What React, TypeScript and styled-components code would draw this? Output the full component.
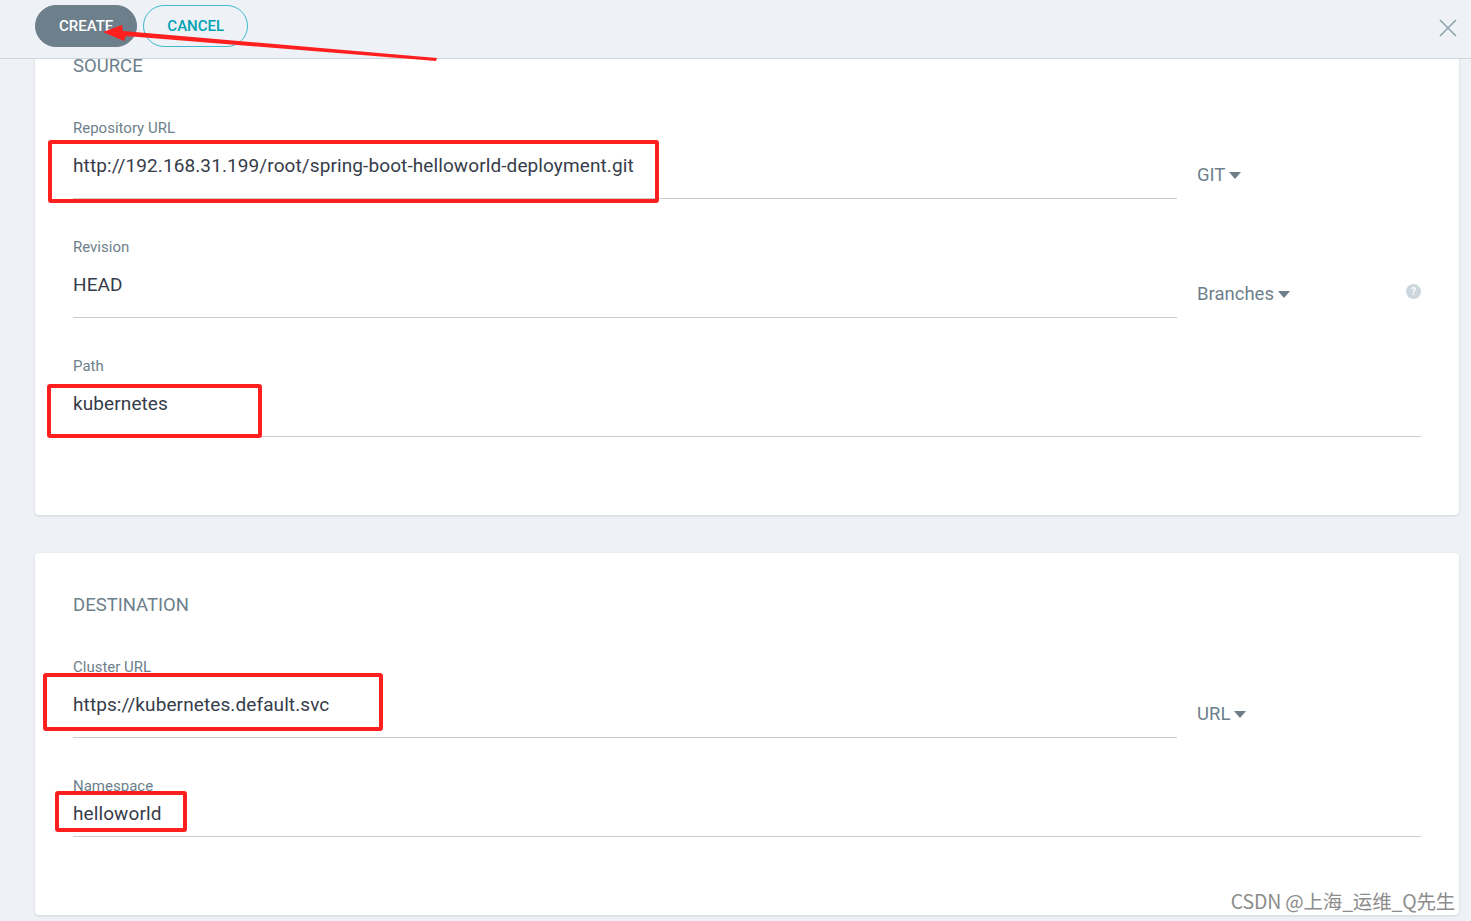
import styled, { createGlobalStyle } from 'styled-components';

const GlobalStyle = createGlobalStyle`
  html, body {
    margin: 0;
    padding: 0;
    background: #eef1f5;
    font-family: Roboto, "Noto Sans", sans-serif;
    overflow: hidden;
  }
`;

interface FieldProps {
  label: string;
  value: string;
  compact?: boolean;
  full?: boolean;
}

function Field({ label, value, compact, full }: FieldProps) {
  return (
    <FieldBox $full={full}>
      <Label>{label}</Label>
      <ValueInput $compact={compact}>{value}</ValueInput>
    </FieldBox>
  );
}

function Dropdown({ text }: { text: string }) {
  return (
    <DropdownBox>
      {text}
      <Caret viewBox="0 0 12 7">
        <path d="M0 0h12L6 7z" fill="#6d7f8b" />
      </Caret>
    </DropdownBox>
  );
}

function App() {
  return (
    <Page>
      <GlobalStyle />
      <Header>
        <CreateButton>CREATE</CreateButton>
        <CancelButton>CANCEL</CancelButton>
        <CloseIcon viewBox="0 0 18 18">
          <path d="M1 1l16 16M17 1L1 17" stroke="#8fa3b0" strokeWidth="1.6" />
        </CloseIcon>
      </Header>
      <Body>
        <Card $clipped>
          <SectionTitle>SOURCE</SectionTitle>
          <Row>
            <Field label="Repository URL" value="http://192.168.31.199/root/spring-boot-helloworld-deployment.git" />
            <Dropdown text="GIT" />
          </Row>
          <Row>
            <Field label="Revision" value="HEAD" />
            <Dropdown text="Branches" />
            <HelpIcon>?</HelpIcon>
          </Row>
          <Row>
            <Field label="Path" value="kubernetes" full />
          </Row>
        </Card>
        <Card>
          <SectionTitle>DESTINATION</SectionTitle>
          <Row>
            <Field label="Cluster URL" value="https://kubernetes.default.svc" />
            <Dropdown text="URL" />
          </Row>
          <Row>
            <Field label="Namespace" value="helloworld" full compact />
          </Row>
        </Card>
      </Body>

      <Mark style={{ left: 48, top: 140, width: 611, height: 63 }} />
      <Mark style={{ left: 47, top: 384, width: 215, height: 54 }} />
      <Mark style={{ left: 43, top: 673, width: 340, height: 58 }} />
      <Mark style={{ left: 55, top: 791, width: 132, height: 41 }} />
      <Arrow viewBox="0 0 1471 921">
        <polygon points="437,58 436,61 126,36 124,41 103,32 122,25 123,31" fill="#ff1f1f" />
      </Arrow>
      <Watermark>CSDN @上海_运维_Q先生</Watermark>
    </Page>
  );
}

const Page = styled.div`
  position: relative;
  height: 921px;
  display: flex;
  flex-direction: column;
`;

const Header = styled.div`
  height: 53px;
  flex-shrink: 0;
  display: flex;
  align-items: flex-start;
  gap: 6px;
  padding: 5px 14px 0 35px;
  border-bottom: 1px solid #cfd6dc;
  box-sizing: content-box;
`;

const PillButton = styled.button`
  height: 42px;
  border-radius: 21px;
  font-family: Roboto, sans-serif;
  font-size: 15px;
  font-weight: 500;
  padding: 0 23px;
  cursor: pointer;
`;

const CreateButton = styled(PillButton)`
  background: #6d7f8b;
  border: 1px solid #6d7f8b;
  color: #fff;
`;

const CancelButton = styled(PillButton)`
  background: transparent;
  border: 1px solid #3ebccd;
  color: #00a2b3;
`;

const CloseIcon = styled.svg`
  width: 18px;
  height: 18px;
  margin-left: auto;
  margin-top: 14px;
`;

const Body = styled.div`
  flex: 1;
  overflow: hidden;
  padding: 0 12px 0 35px;
`;

const Card = styled.div<{ $clipped?: boolean }>`
  background: #fff;
  border-radius: 4px;
  box-shadow: 0 1px 3px rgba(0, 0, 0, 0.12);
  padding: 43px 38px 38px;
  margin-top: ${(p) => (p.$clipped ? '-45px' : '38px')};
`;

const SectionTitle = styled.div`
  font-size: 18.5px;
  line-height: 12px;
  padding-top: 3px;
  color: #6d7f8b;
  margin-bottom: 48px;
`;

const Row = styled.div`
  display: flex;
  align-items: flex-start;
`;

const FieldBox = styled.div<{ $full?: boolean }>`
  width: ${(p) => (p.$full ? '100%' : '1104px')};
  flex-shrink: 0;
  margin-bottom: 40px;
`;

const Label = styled.div`
  font-size: 15px;
  line-height: 16px;
  color: #6d7f8b;
`;

const ValueInput = styled.div<{ $compact?: boolean }>`
  font-size: 19px;
  letter-spacing: 0.1px;
  line-height: 21px;
  color: #363c4a;
  padding-top: ${(p) => (p.$compact ? '9px' : '19px')};
  padding-bottom: ${(p) => (p.$compact ? '12px' : '22px')};
  border-bottom: 1px solid #cccccc;
`;

const DropdownBox = styled.div`
  margin-left: 20px;
  padding-top: 45px;
  font-size: 18.5px;
  line-height: 21px;
  color: #6d7f8b;
  display: flex;
  align-items: center;
  gap: 4px;
`;

const Caret = styled.svg`
  width: 12px;
  height: 7px;
`;

const HelpIcon = styled.div`
  margin-left: auto;
  margin-top: 45px;
  width: 15px;
  height: 15px;
  border-radius: 50%;
  background: #ccd6dd;
  color: #fff;
  font-size: 10px;
  font-weight: 700;
  line-height: 15px;
  text-align: center;
`;

const Mark = styled.div`
  position: absolute;
  box-sizing: border-box;
  border: 4px solid #ff1f1f;
  border-radius: 3px;
  pointer-events: none;
`;

const Arrow = styled.svg`
  position: absolute;
  left: 0;
  top: 0;
  width: 1471px;
  height: 921px;
  pointer-events: none;
`;

const Watermark = styled.div`
  position: absolute;
  right: 16px;
  bottom: 8px;
  font-family: "Noto Sans CJK SC", sans-serif;
  font-size: 19.5px;
  line-height: 24px;
  color: #8c8c8c;
  letter-spacing: -0.2px;
`;

export default App;
